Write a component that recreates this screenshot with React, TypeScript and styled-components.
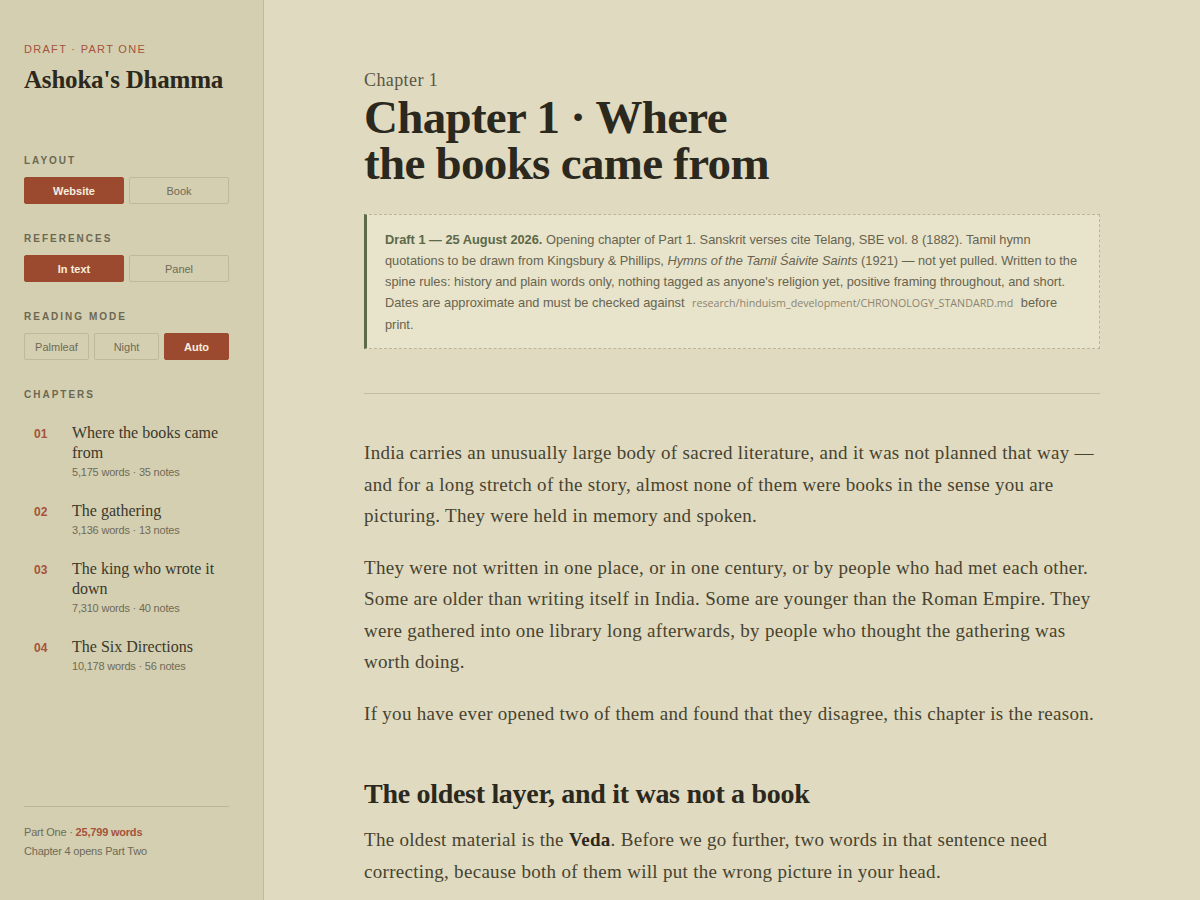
import styled, { createGlobalStyle } from 'styled-components';

const GlobalStyle = createGlobalStyle`
  html, body {
    margin: 0;
    padding: 0;
    background: #e0dac1;
  }
  * {
    box-sizing: border-box;
  }
`;

const chapters = [
  { num: '01', title: 'Where the books came from', words: '5,175', notes: 35 },
  { num: '02', title: 'The gathering', words: '3,136', notes: 13 },
  { num: '03', title: 'The king who wrote it down', words: '7,310', notes: 40 },
  { num: '04', title: 'The Six Directions', words: '10,178', notes: 56 },
];

export default function App() {
  return (
    <>
      <GlobalStyle />
      <Page>
        <Sidebar>
          <Eyebrow>Draft · Part One</Eyebrow>
          <BookTitle>Ashoka's Dhamma</BookTitle>

          <Group>
            <GroupLabel>Layout</GroupLabel>
            <Segmented>
              <Seg $active>Website</Seg>
              <Seg>Book</Seg>
            </Segmented>
          </Group>

          <Group>
            <GroupLabel>References</GroupLabel>
            <Segmented>
              <Seg $active>In text</Seg>
              <Seg>Panel</Seg>
            </Segmented>
          </Group>

          <Group>
            <GroupLabel>Reading mode</GroupLabel>
            <Segmented>
              <Seg>Palmleaf</Seg>
              <Seg>Night</Seg>
              <Seg $active>Auto</Seg>
            </Segmented>
          </Group>

          <Group>
            <GroupLabel>Chapters</GroupLabel>
            <ChapterList>
              {chapters.map((c) => (
                <ChapterItem key={c.num}>
                  <ChapterNum>{c.num}</ChapterNum>
                  <div>
                    <ChapterTitle>{c.title}</ChapterTitle>
                    <ChapterMeta>
                      {c.words} words · {c.notes} notes
                    </ChapterMeta>
                  </div>
                </ChapterItem>
              ))}
            </ChapterList>
          </Group>

          <SideFooter>
            <FooterLine>
              Part One · <strong>25,799 words</strong>
            </FooterLine>
            <FooterLine>Chapter 4 opens Part Two</FooterLine>
          </SideFooter>
        </Sidebar>

        <Main>
          <Article>
            <Kicker>Chapter 1</Kicker>
            <Title>
              Chapter 1 · Where
              <br />
              the books came from
            </Title>

            <Note>
              <strong>Draft 1 — 25 August 2026.</strong> Opening chapter of Part 1. Sanskrit
              verses cite Telang, SBE vol. 8 (1882). Tamil hymn quotations to be drawn from
              Kingsbury &amp; Phillips, <em>Hymns of the Tamil Śaivite Saints</em> (1921) — not
              yet pulled. Written to the spine rules: history and plain words only, nothing
              tagged as anyone's religion yet, positive framing throughout, and short. Dates
              are approximate and must be checked against{' '}
              <Path>research/hinduism_development/CHRONOLOGY_STANDARD.md</Path> before print.
            </Note>

            <Rule />

            <Para>
              India carries an unusually large body of sacred literature, and it was not
              planned that way — and for a long stretch of the story, almost none of them were
              books in the sense you are picturing. They were held in memory and spoken.
            </Para>
            <Para>
              They were not written in one place, or in one century, or by people who had met
              each other. Some are older than writing itself in India. Some are younger than
              the Roman Empire. They were gathered into one library long afterwards, by people
              who thought the gathering was worth doing.
            </Para>
            <Para>
              If you have ever opened two of them and found that they disagree, this chapter is
              the reason.
            </Para>

            <Heading>The oldest layer, and it was not a book</Heading>
            <Para>
              The oldest material is the <strong>Veda</strong>. Before we go further, two words
              in that sentence need correcting, because both of them will put the wrong picture
              in your head.
            </Para>
          </Article>
        </Main>
      </Page>
    </>
  );
}

const Page = styled.div`
  display: flex;
  height: 100vh;
  overflow: hidden;
`;

const Sidebar = styled.aside`
  width: 264px;
  flex-shrink: 0;
  height: 100vh;
  background: #d4cfb1;
  border-right: 1px solid #c0ba9b;
  padding: 42px 34px 42px 24px;
  display: flex;
  flex-direction: column;
  font-family: 'Liberation Sans', Arial, sans-serif;
`;

const Eyebrow = styled.div`
  font-size: 11px;
  letter-spacing: 1.3px;
  text-transform: uppercase;
  color: #a5533a;
  line-height: 14px;
`;

const BookTitle = styled.h1`
  margin: 9px 0 0;
  font-family: 'Liberation Serif', 'Times New Roman', serif;
  font-weight: 700;
  font-size: 25px;
  line-height: 30px;
  color: #2b281d;
  letter-spacing: -0.2px;
`;

const Group = styled.section`
  margin-top: 29px;
  &:first-of-type {
    margin-top: 60px;
  }
`;

const GroupLabel = styled.div`
  font-size: 10px;
  font-weight: 700;
  letter-spacing: 2px;
  text-transform: uppercase;
  color: #6c6852;
  line-height: 12px;
  margin-bottom: 10px;
`;

const Segmented = styled.div`
  display: flex;
  gap: 5px;
`;

const Seg = styled.button<{ $active?: boolean }>`
  flex: 1;
  height: 27px;
  padding: 0;
  border-radius: 2px;
  font-family: 'Liberation Sans', Arial, sans-serif;
  font-size: 11px;
  cursor: pointer;
  border: 1px solid ${(p) => (p.$active ? '#9b4a30' : '#bfb998')};
  background: ${(p) => (p.$active ? '#9b4a30' : 'transparent')};
  color: ${(p) => (p.$active ? '#f6eedf' : '#6f6b56')};
  font-weight: ${(p) => (p.$active ? 700 : 400)};
`;

const ChapterList = styled.ol`
  list-style: none;
  margin: 22px 0 0;
  padding: 0;
  display: flex;
  flex-direction: column;
  gap: 22px;
`;

const ChapterItem = styled.li`
  display: grid;
  grid-template-columns: 38px 1fr;
  padding-left: 10px;
`;

const ChapterNum = styled.span`
  font-size: 12px;
  font-weight: 700;
  color: #a5533a;
  line-height: 20px;
  padding-top: 1px;
`;

const ChapterTitle = styled.div`
  font-family: 'Liberation Serif', 'Times New Roman', serif;
  font-size: 16px;
  line-height: 20px;
  color: #3b382b;
`;

const ChapterMeta = styled.div`
  font-size: 11px;
  line-height: 14px;
  color: #6f6b56;
  margin-top: 2px;
  letter-spacing: -0.2px;
`;

const SideFooter = styled.footer`
  margin-top: auto;
  border-top: 1px solid #bcb697;
  padding-top: 18px;
  display: flex;
  flex-direction: column;
  gap: 5px;
`;

const FooterLine = styled.div`
  font-size: 11px;
  line-height: 14px;
  color: #6f6b56;
  letter-spacing: -0.2px;
  strong {
    color: #a5533a;
    font-weight: 700;
  }
`;

const Main = styled.main`
  flex: 1;
  height: 100vh;
  overflow: hidden;
  padding: 69px 0 0;
`;

const Article = styled.article`
  max-width: 736px;
  margin: 0 auto;
`;

const Kicker = styled.div`
  font-family: 'Liberation Serif', 'Times New Roman', serif;
  font-size: 18px;
  line-height: 22px;
  color: #5a5645;
  letter-spacing: 0.4px;
`;

const Title = styled.h1`
  margin: 3px 0 0;
  font-family: 'Liberation Serif', 'Times New Roman', serif;
  font-weight: 700;
  font-size: 47px;
  line-height: 46px;
  color: #2b281d;
  letter-spacing: -0.7px;
`;

const Note = styled.div`
  margin-top: 28px;
  background: #e8e3cb;
  border: 1px dashed #bdb694;
  border-left: 3px solid #5f6a4a;
  padding: 14px 18px 13px 18px;
  font-family: 'Liberation Sans', Arial, sans-serif;
  font-size: 12.8px;
  line-height: 21px;
  color: #67634f;
  strong {
    color: #5b6947;
    font-weight: 700;
  }
`;

const Path = styled.code`
  font-family: 'Open Sans', sans-serif;
  font-size: 10.7px;
  color: #8b8571;
  padding: 0 4px;
`;

const Rule = styled.hr`
  margin: 44px 0 43px;
  border: none;
  border-top: 1px solid #c3bd9f;
`;

const Para = styled.p`
  margin: 0 0 20px;
  font-family: 'Liberation Serif', 'Times New Roman', serif;
  font-size: 19px;
  line-height: 31.5px;
  color: #47432f;
  letter-spacing: 0.3px;
  strong {
    color: #2b281d;
  }
`;

const Heading = styled.h2`
  margin: 47px 0 12px;
  font-family: 'Liberation Serif', 'Times New Roman', serif;
  font-weight: 700;
  font-size: 28px;
  line-height: 36px;
  color: #2b281d;
  letter-spacing: -0.3px;
`;
